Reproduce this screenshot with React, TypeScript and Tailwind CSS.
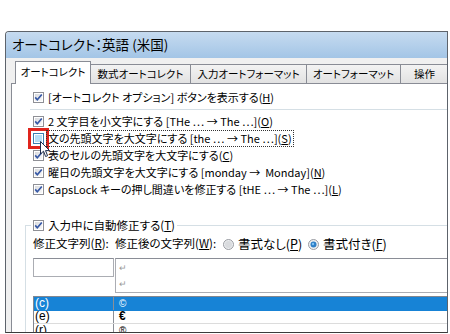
import React from 'react';

const jp = "font-['Noto_Sans_CJK_JP','Noto_Sans',sans-serif] [font-feature-settings:'palt']";

function CheckBox({ checked = true, hot = false }: { checked?: boolean; hot?: boolean }) {
  return (
    <svg width="11" height="11" viewBox="0 0 11 11" className="shrink-0">
      <defs>
        <linearGradient id="cbfill" x1="0" y1="0" x2="1" y2="1">
          <stop offset="0" stopColor="#d8dade" />
          <stop offset="1" stopColor="#f8f8f8" />
        </linearGradient>
      </defs>
      <rect x="0.5" y="0.5" width="10" height="10" fill="#fff" stroke={hot ? '#3c7fb1' : '#8f9096'} />
      <rect x="2" y="2" width="7" height="7" fill={hot ? '#b4dff7' : 'url(#cbfill)'} />
      {checked && (
        <path d="M2.2 5.4 L4.3 7.8 L8.8 2.5" fill="none" stroke="#3658a6" strokeWidth="1.7" />
      )}
    </svg>
  );
}

function Radio({ checked = false }: { checked?: boolean }) {
  return (
    <svg width="11" height="11" viewBox="0 0 11 11" className="shrink-0">
      <circle cx="5.5" cy="5.5" r="5" fill="#eceef0" stroke="#9a9ca2" />
      {checked ? (
        <>
          <circle cx="5.5" cy="5.5" r="3" fill="#2e7fc7" />
          <circle cx="5" cy="5" r="1.2" fill="#7fc2f2" />
        </>
      ) : (
        <circle cx="5.5" cy="5.5" r="3.5" fill="#d9dbde" />
      )}
    </svg>
  );
}

function Key({ k }: { k: string }) {
  return (
    <>
      (<u>{k}</u>)
    </>
  );
}

const rows: { text: React.ReactNode; checked: boolean; focus?: boolean }[] = [
  { text: <>2 文字目を小文字にする [THe … → The …]<Key k="O" /></>, checked: true },
  { text: <>文の先頭文字を大文字にする [the … → The …]<Key k="S" /></>, checked: false, focus: true },
  { text: <>表のセルの先頭文字を大文字にする<Key k="C" /></>, checked: true },
  { text: <>曜日の先頭文字を大文字にする [monday → &nbsp;Monday]<Key k="N" /></>, checked: true },
  { text: <>CapsLock キーの押し間違いを修正する [tHE … → The …]<Key k="L" /></>, checked: true },
];

const tabs = [
  { label: '数式オートコレクト', w: 'w-[100px]' },
  { label: '入力オートフォーマット', w: 'w-[116px]' },
  { label: 'オートフォーマット', w: 'w-[94px]' },
  { label: '操作', w: 'w-[48px]' },
];

const entries = [
  { from: '(c)', to: '©', selected: true },
  { from: '(e)', to: '€', selected: false },
  { from: '(r)', to: '®', selected: false },
];

export default function App() {
  return (
    <div className={`relative w-[450px] h-[334px] overflow-hidden bg-white text-black ${jp}`}>
      {/* cropped dialog */}
      <div className="ml-[5px] mt-[31px] w-[443px] h-[302px] overflow-hidden rounded-tl-[4px] border border-[#5d636b] border-b-[#3b3b3b] bg-[#f0f0f0]">
        <div className="w-[620px]">
          {/* title bar */}
          <div className="flex h-[26px] items-center bg-linear-to-b from-[#c6dbf0] to-[#a3c5e6] pl-[6px] text-[13.5px] leading-none">
            オートコレクト：英語 (米国)
          </div>

          {/* tabs */}
          <div className="flex h-[25px] items-end pl-[9px] text-[10.5px] leading-none">
            <div className="relative z-10 -mb-px flex h-[23px] w-[76px] items-center justify-center border border-b-0 border-[#898c95] bg-white pb-[1px]">
              オートコレクト
            </div>
            {tabs.map((t) => (
              <div
                key={t.label}
                className={`flex h-[19px] ${t.w} items-center justify-center border-t border-r border-[#898c95] bg-linear-to-b from-[#f3f3f3] to-[#e2e2e2] pt-[1px]`}
              >
                {t.label}
              </div>
            ))}
          </div>

          {/* panel */}
          <div className="ml-[5px] h-[260px] border-t border-l border-[#898c95] bg-white text-[11px] leading-none">
            <div className="mt-[5px] flex h-[17px] items-center gap-[3px] pl-[21px]">
              <CheckBox />
              <span className="px-[1px]">[オートコレクト オプション] ボタンを表示する<Key k="H" /></span>
            </div>
            <div className="ml-[18px] mt-[3px] border-t border-[#d5dfe5]" />

            <div className="mt-[3px]">
              {rows.map((r, i) => (
                <div key={i} className="flex h-[17px] items-center gap-[3px] pl-[21px]">
                  {r.focus ? (
                    <span className="flex outline-[3px] outline-offset-[2px] outline-solid outline-[#e0251d]">
                      <CheckBox checked={false} hot />
                    </span>
                  ) : (
                    <CheckBox checked={r.checked} />
                  )}
                  <span
                    className={
                      r.focus
                        ? 'px-[1px] py-[2px] outline-1 outline-dotted outline-[#333]'
                        : 'px-[1px]'
                    }
                  >
                    {r.text}
                  </span>
                </div>
              ))}
            </div>

            {/* group: replace as you type */}
            <div className="ml-[13px] mt-[27px] border-t border-l border-[#d5dfe5] pb-[20px]">
              <div className="-mt-[9px] ml-[5px] flex h-[17px] w-fit items-center gap-[4px] bg-white px-[2px] text-[11.5px]">
                <CheckBox />
                <span>入力中に自動修正する<Key k="T" /></span>
              </div>

              <div className="mt-[2px] flex h-[16px] items-center pl-[7px] text-[11.5px]">
                <span className="w-[82px]">修正文字列<Key k="R" />:</span>
                <span className="w-[108px]">修正後の文字列<Key k="W" />:</span>
                <span className="flex w-[85px] items-center gap-[4px]">
                  <Radio />
                  <span className="text-[12.5px]">書式なし<Key k="P" /></span>
                </span>
                <span className="flex items-center gap-[4px]">
                  <Radio checked />
                  <span className="text-[12.5px]">書式付き<Key k="F" /></span>
                </span>
              </div>

              <div className="mt-[6px] flex items-start gap-[1px] pl-[7px]">
                <div className="h-[19px] w-[81px] border border-[#abadb3] border-t-[#8a8d96] bg-white" />
                <div className="flex h-[35px] w-[460px] flex-col justify-center border border-[#abadb3] border-t-[#8a8d96] bg-white pl-[3px] text-[9px] leading-[16px] text-[#9a9a9a]">
                  <span>↵</span>
                  <span>↵</span>
                </div>
              </div>

              <div className="ml-[7px] mt-[3px] w-[560px] border border-[#828790] font-['Liberation_Sans',sans-serif] text-[12px] leading-[13px]">
                {entries.map((e) => (
                  <div
                    key={e.from}
                    className={`flex h-[13.5px] items-center border-b ${
                      e.selected ? 'border-[#1783d6] bg-[#1783d6] text-white' : 'border-[#dcdcdc]'
                    }`}
                  >
                    <span className="flex w-[80px] items-center self-stretch border-r border-[#8c8f96] pl-[1px]">
                      {e.from}
                    </span>
                    <span className={`pl-[5px] ${e.to === '€' ? 'font-bold' : 'text-[10px]'}`}>{e.to}</span>
                  </div>
                ))}
              </div>
            </div>
          </div>
        </div>
      </div>

      {/* mouse pointer */}
      <svg
        width="11"
        height="17"
        viewBox="0 0 11 17"
        className="absolute left-[40px] top-[141px]"
      >
        <path
          d="M0.5 0.5 L0.5 13 L3.5 10.2 L5.6 15.5 L7.6 14.7 L5.5 9.6 L9.6 9.6 Z"
          fill="#fff"
          stroke="#1b2a4a"
          strokeWidth="1"
          strokeLinejoin="round"
        />
      </svg>
    </div>
  );
}
